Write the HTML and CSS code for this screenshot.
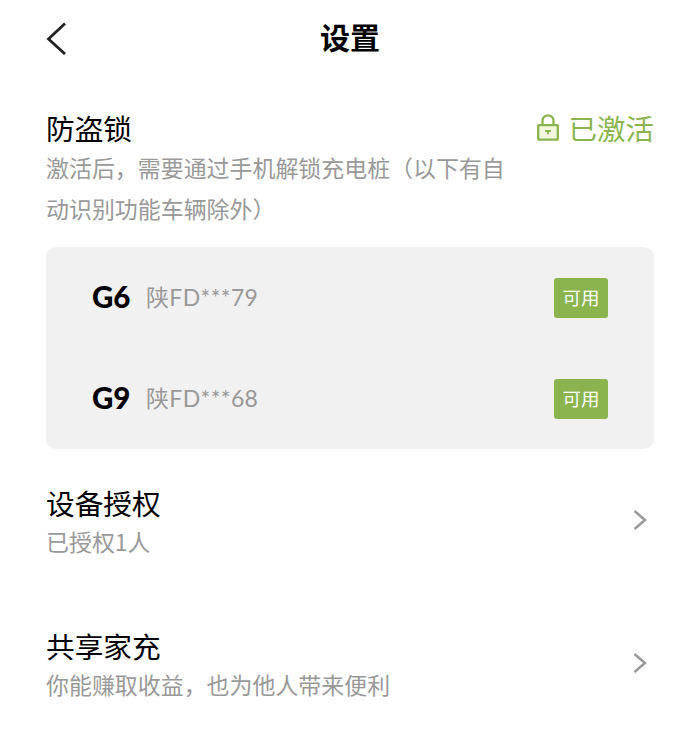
FILE: index.html
```html
<!DOCTYPE html>
<html lang="zh-CN">
<head>
    <meta charset="UTF-8">
    <meta name="viewport" content="width=device-width, initial-scale=1.0">
    <title>设置</title>
    <link rel="stylesheet" href="styles.css">
</head>
<body>
    <header class="header">
        <svg class="back" width="22" height="34" viewBox="0 0 22 34"><path d="M19 2.5 L2.5 18 L19 33"/></svg>
        <h1>设置</h1>
    </header>

    <main>
        <section class="lock">
            <div class="lock-title">
                <h2>防盗锁</h2>
                <div class="status">
                    <svg class="lock-icon" width="22" height="28" viewBox="0 0 22 28">
                        <rect x="1.2" y="11.2" width="19.6" height="14.4" rx="0.5"/>
                        <path d="M5.5 11 V6.5 a5.5 5.2 0 0 1 11 0 V11"/>
                        <path class="keyhole" d="M8 16 H14 V17.5 L11.8 18.5 V20.5 H10.2 V18.5 L8 17.5 Z"/>
                    </svg>
                    <span>已激活</span>
                </div>
            </div>
            <p class="desc">激活后，需要通过手机解锁充电桩（以下有自<br>动识别功能车辆除外）</p>
        </section>

        <div class="cars">
            <div class="car">
                <span class="model">G6</span>
                <span class="plate">陕FD***79</span>
                <span class="tag">可用</span>
            </div>
            <div class="car">
                <span class="model">G9</span>
                <span class="plate">陕FD***68</span>
                <span class="tag">可用</span>
            </div>
        </div>

        <section class="item">
            <div>
                <h2>设备授权</h2>
                <p class="desc">已授权1人</p>
            </div>
            <svg class="arrow" width="14" height="22" viewBox="0 0 14 22"><path d="M1.5 2 L12 11 L1.5 20"/></svg>
        </section>

        <section class="item">
            <div>
                <h2>共享家充</h2>
                <p class="desc">你能赚取收益，也为他人带来便利</p>
            </div>
            <svg class="arrow" width="14" height="22" viewBox="0 0 14 22"><path d="M1.5 2 L12 11 L1.5 20"/></svg>
        </section>
    </main>
</body>
</html>
```
FILE: styles.css
```css
* {
    box-sizing: border-box;
}

body {
    margin: 0;
    background: #fff;
    color: #000;
    font-family: "Noto Sans CJK SC", sans-serif;
}

h1, h2, p {
    margin: 0;
}

svg {
    display: block;
    fill: none;
}

.header {
    display: grid;
    grid-template-columns: 22px 1fr 22px;
    align-items: center;
    height: 76px;
    padding: 0 46px;
}

.header h1 {
    padding-bottom: 4px;
    font-size: 30px;
    line-height: 40px;
    text-align: center;
}

.back {
    stroke: #222;
    stroke-width: 2.8;
}

main {
    padding: 32px 46px 0;
}

h2 {
    font-size: 28.7px;
    font-weight: 400;
    line-height: 40px;
}

.lock-title {
    display: flex;
    justify-content: space-between;
    height: 39px;
}

.status {
    display: flex;
    align-items: center;
    gap: 9px;
    height: 40px;
    color: #8bb44e;
    font-size: 28.5px;
    line-height: 40px;
}

.lock-icon {
    stroke: #8bb44e;
    stroke-width: 2.3;
}

.lock-icon rect {
    fill: #f1f8df;
}

.lock-icon .keyhole {
    fill: #8bb44e;
    stroke: none;
}

.desc {
    color: #999;
    font-size: 22.95px;
    line-height: 41px;
}

.cars {
    height: 202px;
    margin: 18px 0 33px;
    padding: 0 46px;
    border-radius: 10px;
    background: #f1f1f1;
}

.car {
    display: flex;
    align-items: center;
    height: 101px;
}

.model {
    width: 54px;
    padding-bottom: 3px;
    font-family: Lato, "Noto Sans CJK SC", sans-serif;
    font-size: 29.5px;
    font-weight: 900;
}

.plate {
    padding-bottom: 3px;
    color: #999;
    font-family: Lato, "Noto Sans CJK SC", sans-serif;
    font-size: 23px;
    letter-spacing: 0.35px;
}

.tag {
    width: 54px;
    height: 40px;
    margin-left: auto;
    border-radius: 3px;
    background: #8bb44e;
    color: #fff;
    font-size: 18.5px;
    line-height: 39px;
    text-align: center;
}

.item {
    display: flex;
    align-items: center;
    justify-content: space-between;
    height: 78px;
    margin-bottom: 65px;
    padding-right: 7px;
}

.item:last-child {
    margin-bottom: 0;
}

.item .desc {
    line-height: 37px;
}

.arrow {
    margin-bottom: 2px;
    stroke: #999;
    stroke-width: 2.5;
}
```
